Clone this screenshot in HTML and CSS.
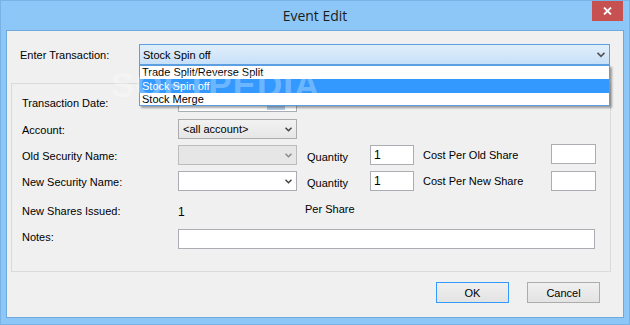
FILE: index.html
```html
<!DOCTYPE html>
<html>

	<head>
		<meta charset="UTF-8">
		<title>Event Edit</title>
		<link rel="stylesheet" href="styles.css">
	</head>

	<body>
		<div class="window">
			<div class="titlebar">
				<span></span>
				<span class="title">Event Edit</span>
				<button class="close">
					<svg width="9" height="8" viewBox="0 0 9 8"><path d="M1 0.5 L8 7.5 M8 0.5 L1 7.5" stroke="#fff" stroke-width="1.8" fill="none"/></svg>
				</button>
			</div>
			<div class="client">
				<div class="trans-row">
					<span class="trans-label">Enter Transaction:</span>
					<div class="combo-hot">
						<span>Stock Spin off</span>
						<svg width="8" height="6" viewBox="0 0 8 6"><path d="M0.5 0.8 L4 4.3 L7.5 0.8" stroke="#555" stroke-width="1.8" fill="none"/></svg>
					</div>
				</div>
				<ul class="droplist">
					<li>Trade Split/Reverse Split</li>
					<li class="sel">Stock Spin off</li>
					<li>Stock Merge</li>
				</ul>
				<div class="watermark">SOFTPEDIA<sup>®</sup></div>

				<div class="group">
					<div class="row r-date">
						<span class="lbl">Transaction Date:</span>
						<div class="datebox"><span class="cal"></span></div>
					</div>
					<div class="row r-acc">
						<span class="lbl">Account:</span>
						<div class="combo">
							<span>&lt;all account&gt;</span>
							<svg width="7" height="5" viewBox="0 0 7 5"><path d="M0.5 0.8 L3.5 3.8 L6.5 0.8" stroke="#444" stroke-width="1.5" fill="none"/></svg>
						</div>
					</div>
					<div class="row r-old">
						<span class="lbl">Old Security Name:</span>
						<div class="combo combo-off">
							<span></span>
							<svg width="7" height="5" viewBox="0 0 7 5"><path d="M0.5 0.8 L3.5 3.8 L6.5 0.8" stroke="#8a8a8a" stroke-width="1.5" fill="none"/></svg>
						</div>
						<span class="qty">Quantity</span>
						<div class="edit qbox">1</div>
						<span class="cost">Cost Per Old Share</span>
						<div class="edit cbox cbox-up"></div>
					</div>
					<div class="row r-new">
						<span class="lbl">New Security Name:</span>
						<div class="combo combo-edit">
							<span></span>
							<svg width="7" height="5" viewBox="0 0 7 5"><path d="M0.5 0.8 L3.5 3.8 L6.5 0.8" stroke="#444" stroke-width="1.5" fill="none"/></svg>
						</div>
						<span class="qty">Quantity</span>
						<div class="edit qbox">1</div>
						<span class="cost">Cost Per New Share</span>
						<div class="edit cbox"></div>
					</div>
					<div class="row r-shares">
						<span class="lbl">New Shares Issued:</span>
						<span class="issued">1</span>
						<span class="per">Per Share</span>
					</div>
					<div class="row r-notes">
						<span class="lbl">Notes:</span>
						<div class="edit notes"></div>
					</div>
				</div>

				<div class="buttons">
					<button class="btn btn-def">OK</button>
					<button class="btn">Cancel</button>
				</div>
			</div>
		</div>
	</body>

</html>
```

FILE: styles.css
```css
* {
	box-sizing: border-box;
}

body,
ul {
	margin: 0;
	padding: 0;
}

body {
	font: 11px "Liberation Sans", Arial, sans-serif;
	color: #000;
	background: #8cc7f8;
}

.window {
	width: 630px;
	height: 325px;
	background: #8cc7f8;
	border: 1px solid #79b2e6;
}

.titlebar {
	height: 29px;
	display: grid;
	grid-template-columns: 1fr auto 1fr;
	align-items: start;
}

.title {
	font: 14px "Open Sans", "Noto Sans", sans-serif;
	color: #1c1c1c;
	line-height: 30px;
}

.close {
	justify-self: end;
	width: 31px;
	height: 20px;
	margin-right: 6px;
	background: #c75050;
	border: 0;
	padding: 0;
	display: flex;
	align-items: center;
	justify-content: center;
}

.client {
	position: relative;
	height: 288px;
	margin: 0 5px;
	background: #f0f0f0;
	border: 1px solid #6fa8dc;
}

/* top line */
.trans-row {
	display: flex;
	align-items: center;
	padding-top: 13px;
}

.trans-label {
	width: 132px;
	padding-left: 13px;
}

.combo-hot {
	width: 471px;
	height: 21px;
	border: 1px solid #5ca0e4;
	background: linear-gradient(#e2effc, #c6e0f8);
	display: flex;
	align-items: center;
	justify-content: space-between;
	padding: 0 4px 0 3px;
}

.droplist {
	position: absolute;
	left: 132px;
	top: 34px;
	width: 471px;
	height: 41px;
	background: #fff;
	border: 1px solid #5c9ee0;
	box-shadow: 2px 2px 2px rgba(0, 0, 0, .35);
	list-style: none;
	z-index: 2;
}

.droplist li {
	height: 13px;
	line-height: 13px;
	padding-left: 2px;
}

.droplist li.sel {
	background: #3399ff;
	color: #fff;
	height: 14px;
	line-height: 14px;
}

.watermark {
	position: absolute;
	left: 104px;
	top: 34px;
	font: bold 35px "Liberation Sans", sans-serif;
	color: rgba(255, 255, 255, .3);
	letter-spacing: 1px;
	z-index: 3;
	pointer-events: none;
}

.watermark sup {
	font-size: 11px;
	vertical-align: 20px;
}

/* group box */
.group {
	width: 600px;
	height: 189px;
	margin: 18px 0 0 4px;
	border: 1px solid #dadada;
	padding: 8px 0 0 10px;
}

.row {
	display: flex;
	align-items: center;
	height: 20px;
}

.r-acc {
	margin-top: 7px;
}

.r-old,
.r-new {
	margin-top: 6px;
}

.r-shares,
.r-notes {
	margin-top: 9px;
}

.lbl {
	width: 156px;
	flex-shrink: 0;
	padding-top: 1px;
}

.datebox {
	width: 119px;
	height: 20px;
	background: #fff;
	border: 1px solid #abadb3;
	position: relative;
}

.cal {
	position: absolute;
	right: 11px;
	top: 3px;
	width: 18px;
	height: 14px;
	background: #b4cfe8;
}

.combo {
	width: 119px;
	height: 20px;
	border: 1px solid #acacac;
	background: linear-gradient(#f2f2f2, #e6e6e6);
	display: flex;
	align-items: center;
	justify-content: space-between;
	padding: 0 4px 0 4px;
}

.combo-off {
	background: #e6e6e6;
	border-color: #bcbcbc;
}

.combo-edit {
	background: #fff;
	border-color: #abadb3;
}

.qty {
	width: 63px;
	margin-left: 10px;
	padding-top: 4px;
}

.edit {
	height: 20px;
	background: #fff;
	border: 1px solid #abadb3;
	padding-left: 3px;
	line-height: 18px;
	font-size: 12px;
}

.qbox {
	width: 44px;
}

.cost {
	width: 128px;
	margin-left: 9px;
}

.cbox {
	width: 45px;
}

.cbox-up {
	margin-top: -3px;
}

.issued {
	width: 127px;
	font-size: 12px;
	padding-top: 3px;
}

.per {
	padding-bottom: 2px;
}

.r-notes {
	align-items: flex-start;
}

.r-notes .lbl {
	padding-top: 2px;
}

.notes {
	width: 417px;
}

/* bottom buttons */
.buttons {
	display: flex;
	justify-content: flex-end;
	gap: 18px;
	margin-top: 10px;
	padding-right: 23px;
}

.btn {
	width: 73px;
	height: 21px;
	font: 11px "Liberation Sans", Arial, sans-serif;
	background: linear-gradient(#f0f0f0, #e3e3e3);
	border: 1px solid #acacac;
	padding: 0;
}

.btn-def {
	border-color: #3399ff;
}
```
